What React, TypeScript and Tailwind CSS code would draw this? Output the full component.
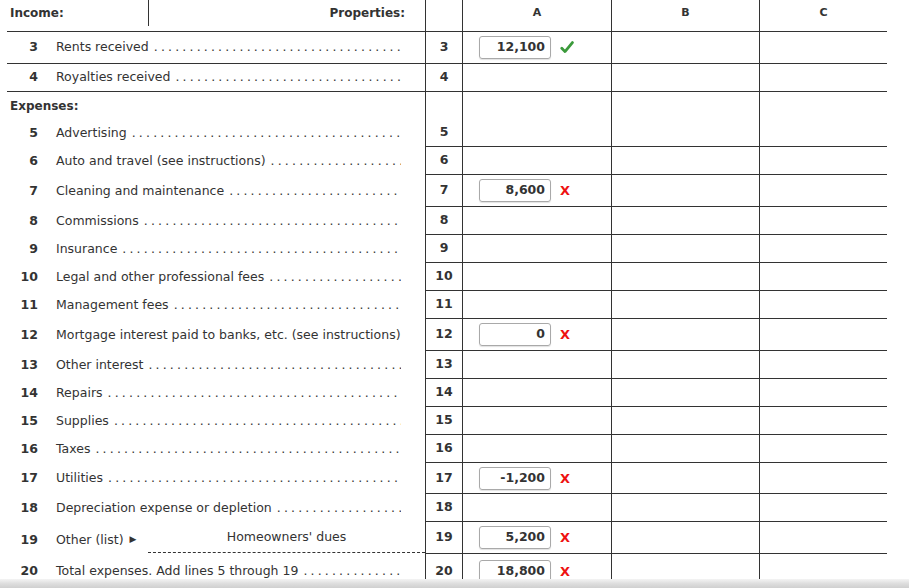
import React from "react"

type Mark = "check" | "x"

type Line = {
  n: number
  label: string
  dots?: boolean
  value?: string
  mark?: Mark
  h?: string
}

const income: Line[] = [
  { n: 3, label: "Rents received", dots: true, value: "12,100", mark: "check" },
  { n: 4, label: "Royalties received", dots: true },
]

const expenses: Line[] = [
  { n: 6, label: "Auto and travel (see instructions)", dots: true },
  { n: 7, label: "Cleaning and maintenance", dots: true, value: "8,600", mark: "x" },
  { n: 8, label: "Commissions", dots: true },
  { n: 9, label: "Insurance", dots: true },
  { n: 10, label: "Legal and other professional fees", dots: true },
  { n: 11, label: "Management fees", dots: true },
  { n: 12, label: "Mortgage interest paid to banks, etc. (see instructions)", value: "0", mark: "x" },
  { n: 13, label: "Other interest", dots: true },
  { n: 14, label: "Repairs", dots: true },
  { n: 15, label: "Supplies", dots: true },
  { n: 16, label: "Taxes", dots: true },
  { n: 17, label: "Utilities", dots: true, value: "-1,200", mark: "x", h: "h-[31px]" },
  { n: 18, label: "Depreciation expense or depletion", dots: true },
]

const DOTS = ". ".repeat(80)

function Check() {
  return (
    <svg width="14" height="13" viewBox="0 0 14 13" className="shrink-0">
      <path d="M1.8 7.2 L5 10.6 L12.4 1.6" fill="none" stroke="#3b9a3b" strokeWidth="2.8" strokeLinecap="round" strokeLinejoin="round" />
    </svg>
  )
}

function ValueBox({ value, mark }: { value: string; mark?: Mark }) {
  return (
    <div className="flex items-center pl-[16px]">
      <div className="flex h-[23px] w-[72px] items-center justify-end rounded-[3px] border border-[#a9a9a9] pr-[5px] text-[12.5px] font-bold text-[#333] shadow-[0_1px_1px_rgba(0,0,0,0.12)]">
        {value}
      </div>
      <div className="ml-[9px] flex items-center">
        {mark === "check" ? (
          <Check />
        ) : (
          <span className="text-[13px] font-bold leading-none text-[#ee1111]">X</span>
        )}
      </div>
    </div>
  )
}

function RightCells({ n, value, mark, bottom = true }: { n?: number; value?: string; mark?: Mark; bottom?: boolean }) {
  const b = bottom ? "border-b" : ""
  return (
    <>
      <div className={`flex w-[37px] shrink-0 items-center justify-center border-l border-[#333] font-bold ${b}`}>
        {n}
      </div>
      <div className={`flex w-[149px] shrink-0 items-center border-l border-[#333] ${b}`}>
        {value !== undefined && <ValueBox value={value} mark={mark} />}
      </div>
      <div className={`w-[148px] shrink-0 border-l border-[#333] ${b}`} />
      <div className={`w-[128px] shrink-0 border-l border-[#333] ${b}`} />
    </>
  )
}

function Label({ n, label, dots }: { n: number; label: string; dots?: boolean }) {
  return (
    <div className="flex min-w-0 flex-1 items-center pr-[24px]">
      <span className="w-[31px] shrink-0 text-right font-bold">{n}</span>
      <span className="ml-[18px] shrink-0 whitespace-nowrap">{label}</span>
      {dots && (
        <span className="ml-[5px] min-w-0 flex-1 overflow-hidden whitespace-nowrap tracking-[-0.4px]">{DOTS}</span>
      )}
    </div>
  )
}

export default function App() {
  return (
    <div className="relative h-[588px] w-[909px] overflow-hidden bg-white font-['DejaVu_Sans',Verdana,sans-serif] text-[12.5px] text-[#333]">
      {/* header */}
      <div className="flex h-[32px]">
        <div className="w-[425px] shrink-0 pl-[7px]">
          <div className="flex h-full border-b border-[#333] pb-[5px]">
            <div className="flex w-[142px] items-center border-r border-[#333] pl-[3px] text-[12px] font-bold">Income:</div>
            <div className="flex flex-1 items-center justify-end pr-[20px] text-[12px] font-bold">Properties:</div>
          </div>
        </div>
        <div className="w-[37px] shrink-0 border-b border-l border-[#333]" />
        <div className="flex w-[149px] shrink-0 items-center justify-center border-b border-l border-[#333] pb-[5px] text-[11px] font-bold">A</div>
        <div className="flex w-[148px] shrink-0 items-center justify-center border-b border-l border-[#333] pb-[5px] text-[11px] font-bold">B</div>
        <div className="flex w-[128px] shrink-0 items-center justify-center border-b border-l border-[#333] pb-[5px] text-[11px] font-bold">C</div>
      </div>

      {income.map((r) => (
        <div key={r.n} className={`flex ${r.value ? "h-[32px]" : "h-[28px]"}`}>
          <div className="w-[425px] shrink-0 pl-[7px]">
            <div className="flex h-full border-b border-[#333]">
              <Label n={r.n} label={r.label} dots={r.dots} />
            </div>
          </div>
          <RightCells n={r.n} value={r.value} mark={r.mark} />
        </div>
      ))}

      {/* expenses heading + line 5 */}
      <div className="flex h-[27px]">
        <div className="flex w-[425px] shrink-0 items-center pl-[10px] text-[12px] font-bold">Expenses:</div>
        <RightCells bottom={false} />
      </div>
      <div className="flex h-[28px]">
        <div className="flex w-[425px] shrink-0 pl-[7px]">
          <Label n={5} label="Advertising" dots />
        </div>
        <RightCells n={5} />
      </div>

      {expenses.map((r) => (
        <div key={r.n} className={`flex ${r.h ?? (r.value ? "h-[32px]" : "h-[28px]")}`}>
          <div className="flex w-[425px] shrink-0 pl-[7px]">
            <Label n={r.n} label={r.label} dots={r.dots} />
          </div>
          <RightCells n={r.n} value={r.value} mark={r.mark} />
        </div>
      ))}

      {/* line 19 */}
      <div className="flex h-[32px]">
        <div className="flex w-[425px] shrink-0 pl-[7px]">
          <div className="flex w-[141px] shrink-0 items-center pt-[4px]">
            <span className="w-[31px] shrink-0 text-right font-bold">19</span>
            <span className="ml-[18px] whitespace-nowrap">Other (list)</span>
            <span className="ml-[6px] text-[9px]">▶</span>
          </div>
          <div className="mb-[1px] flex flex-1 items-center justify-center border-b border-dashed border-[#333]">
            Homeowners' dues
          </div>
        </div>
        <RightCells n={19} value="5,200" mark="x" />
      </div>

      {/* line 20 */}
      <div className="flex h-[34px]">
        <div className="flex w-[425px] shrink-0 pl-[7px]">
          <Label n={20} label="Total expenses. Add lines 5 through 19" dots />
        </div>
        <RightCells n={20} value="18,800" mark="x" bottom={false} />
      </div>

      {/* scroll shadow at the bottom edge */}
      <div className="pointer-events-none absolute inset-x-0 bottom-0 h-[9px] bg-gradient-to-b from-[#f4f4f4] via-[#dedede] to-[#cfcfcf]" />
    </div>
  )
}
